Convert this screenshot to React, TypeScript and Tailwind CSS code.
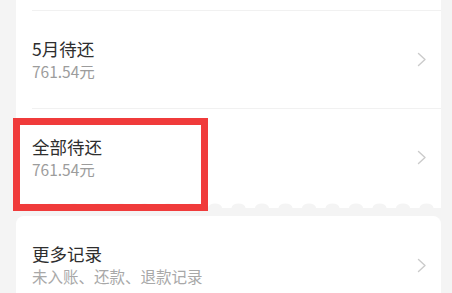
import React from "react"

type Row = { title: string; sub: string }

const font = { fontFamily: '"Noto Sans CJK SC", "Noto Sans", sans-serif' }

function Chevron() {
  return (
    <svg width="10" height="15" viewBox="0 0 10 15" className="shrink-0">
      <polyline points="1.5,1.5 8,7.5 1.5,13.5" fill="none" stroke="#cbcbcb" strokeWidth="1.4" strokeLinecap="round" strokeLinejoin="round" />
    </svg>
  )
}

function ListRow({ title, sub }: Row) {
  return (
    <div className="ml-[16px] flex h-[98px] items-center justify-between border-t border-[#f1f1f1] pr-[14px]">
      <div className="flex flex-col">
        <span className="text-[17.5px] leading-[22px] text-[#2e2e2e]">{title}</span>
        <span className="text-[15.5px] leading-[22px] text-[#9c9c9c]">{sub}</span>
      </div>
      <Chevron />
    </div>
  )
}

function Scallops() {
  const xs = Array.from({ length: 19 }, (_, i) => 11 + i * 23.5)
  return (
    <svg width="425" height="7" viewBox="0 0 425 7" className="absolute bottom-0 left-0">
      {xs.map((x) => (
        <ellipse key={x} cx={x} cy="7" rx="7" ry="4.5" fill="#f4f4f4" />
      ))}
    </svg>
  )
}

export default function App() {
  return (
    <div className="relative h-[293px] w-[452px] overflow-hidden bg-[#f4f4f4] pl-[16px]" style={font}>
      <div className="relative w-[425px] bg-white pb-[2px]">
        <div className="h-[10px]" />
        <ListRow title="5月待还" sub="761.54元" />
        <ListRow title="全部待还" sub="761.54元" />
        <Scallops />
      </div>

      <div className="mt-[8px] w-[425px] rounded-t-[8px] bg-white">
        <div className="flex h-[98px] items-center justify-between pl-[16px] pr-[14px]">
          <div className="flex flex-col">
            <span className="text-[17.5px] leading-[22px] text-[#2e2e2e]">更多记录</span>
            <span className="text-[15.5px] leading-[22px] text-[#a8a8a8]">未入账、还款、退款记录</span>
          </div>
          <Chevron />
        </div>
      </div>

      {/* annotation box */}
      <div className="absolute left-[13px] top-[118px] h-[93px] w-[195px] border-[7px] border-[#f03b3b]" />
    </div>
  )
}
